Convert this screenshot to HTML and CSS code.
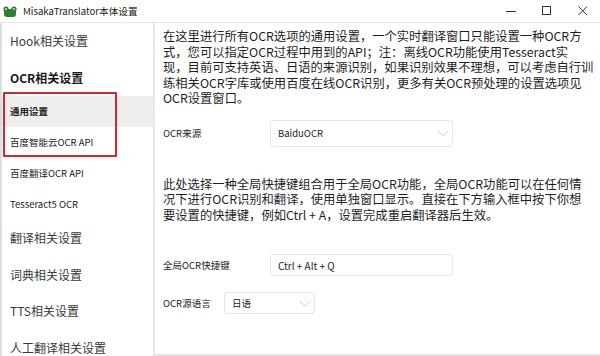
FILE: index.html
```
<!DOCTYPE html>
<html lang="zh-CN">
<head>
  <meta charset="UTF-8" />
  <meta name="viewport" content="width=device-width, initial-scale=1.0"/>
  <title>MisakaTranslator本体设置</title>
  <link rel="stylesheet" href="styles.css">
</head>
<body>

  <div class="window">
    <div class="titlebar">
      <svg class="app-icon" width="14" height="11" viewBox="0 0 14 11">
        <circle cx="3" cy="3" r="2.6" fill="#2f7d32"/>
        <circle cx="11" cy="3" r="2.6" fill="#2f7d32"/>
        <rect x="1" y="3" width="12" height="8" rx="3" fill="#2f7d32"/>
        <circle cx="3" cy="3" r="1" fill="#cfe8c8"/>
        <circle cx="11" cy="3" r="1" fill="#cfe8c8"/>
      </svg>
      <span class="title">MisakaTranslator本体设置</span>
      <div class="win-btns">
        <svg width="10" height="10" viewBox="0 0 10 10"><line x1="0" y1="5.5" x2="10" y2="5.5" stroke="#333" stroke-width="1"/></svg>
        <svg width="10" height="10" viewBox="0 0 10 10"><rect x="0.5" y="0.5" width="8" height="8" fill="none" stroke="#333" stroke-width="1"/></svg>
        <svg width="10" height="10" viewBox="0 0 10 10"><path d="M0.5 0.5 L9 9 M9 0.5 L0.5 9" stroke="#333" stroke-width="1"/></svg>
      </div>
    </div>

    <div class="main">
      <div class="sidebar">
        <div class="nav-item">Hook相关设置</div>
        <div class="nav-item bold">OCR相关设置</div>
        <div class="sub-item active">通用设置</div>
        <div class="sub-item">百度智能云OCR API</div>
        <div class="sub-item">百度翻译OCR API</div>
        <div class="sub-item">Tesseract5 OCR</div>
        <div class="nav-item">翻译相关设置</div>
        <div class="nav-item">词典相关设置</div>
        <div class="nav-item">TTS相关设置</div>
        <div class="nav-item">人工翻译相关设置</div>
        <div class="highlight"></div>
      </div>

      <div class="content">
        <p class="desc">在这里进行所有OCR选项的通用设置，一个实时翻译窗口只能设置一种OCR方<br>式，您可以指定OCR过程中用到的API；注：离线OCR功能使用Tesseract实<br>现，目前可支持英语、日语的来源识别，如果识别效果不理想，可以考虑自行训<br>练相关OCR字库或使用百度在线OCR识别，更多有关OCR预处理的设置选项见<br>OCR设置窗口。</p>

        <div class="row">
          <span class="label">OCR来源</span>
          <div class="select wide">
            <span>BaiduOCR</span>
            <svg class="chevron" width="12" height="7" viewBox="0 0 12 7"><path d="M0.5 0.5 L6 6 L11.5 0.5" fill="none" stroke="#cfcfcf" stroke-width="1"/></svg>
          </div>
        </div>

        <p class="desc second">此处选择一种全局快捷键组合用于全局OCR功能，全局OCR功能可以在任何情<br>况下进行OCR识别和翻译，使用单独窗口显示。直接在下方输入框中按下你想<br>要设置的快捷键，例如Ctrl + A，设置完成重启翻译器后生效。</p>

        <div class="row">
          <span class="label">全局OCR快捷键</span>
          <div class="input">Ctrl + Alt + Q</div>
        </div>

        <div class="row lang-row">
          <span class="label short">OCR源语言</span>
          <div class="select narrow">
            <span>日语</span>
            <svg class="chevron" width="12" height="7" viewBox="0 0 12 7"><path d="M0.5 0.5 L6 6 L11.5 0.5" fill="none" stroke="#cfcfcf" stroke-width="1"/></svg>
          </div>
        </div>
      </div>
    </div>
  </div>

</body>
</html>
```

FILE: styles.css
```
body {
  margin: 0;
  background: #fff;
  font-family: "Noto Sans CJK SC", "Noto Sans", sans-serif;
  color: #222;
}

.window {
  width: 600px;
  height: 356px;
  display: flex;
  flex-direction: column;
  overflow: hidden;
}

.titlebar {
  height: 22px;
  flex: none;
  display: flex;
  align-items: center;
  border-bottom: 1px solid #e6e6e6;
  padding-left: 3px;
}

.app-icon {
  margin-right: 6px;
}

.title {
  font-size: 9.6px;
  color: #222;
}

.win-btns {
  margin-left: auto;
  display: flex;
  gap: 26px;
  padding-right: 12px;
}

.main {
  flex: 1;
  display: flex;
  min-height: 0;
}

.sidebar {
  position: relative;
  width: 151px;
  flex: none;
  border-left: 2px solid #dedede;
  border-right: 2px solid #e8e8e8;
  overflow: hidden;
}

.nav-item {
  height: 36.5px;
  line-height: 36.5px;
  padding-left: 8px;
  font-size: 12px;
  color: #3a3a3a;
  white-space: nowrap;
}

.nav-item.bold {
  font-weight: bold;
  color: #1a1a1a;
}

.sub-item {
  height: 31px;
  line-height: 31px;
  padding-left: 8px;
  font-size: 9.5px;
  color: #222;
}

.sub-item.active {
  background: #efefef;
  font-weight: bold;
}

.highlight {
  position: absolute;
  left: 1px;
  top: 69px;
  width: 110px;
  height: 61px;
  border: 2px solid #d6262d;
  border-radius: 1px;
}

.content {
  flex: 1;
  padding: 6px 0 0 8px;
  border-bottom: 2px solid #e4e4e4;
}

.desc {
  margin: 0;
  font-size: 12.3px;
  line-height: 15.5px;
  white-space: nowrap;
  color: #1e1e1e;
}

.desc.second {
  margin-top: 30px;
}

.row {
  display: flex;
  align-items: center;
  margin-top: 13px;
}

.desc.second + .row {
  margin-top: 31px;
}

.lang-row {
  margin-top: 16px !important;
}

.label {
  width: 107px;
  flex: none;
  font-size: 9.5px;
  color: #222;
}

.label.short {
  width: 61px;
}

.select,
.input {
  box-sizing: border-box;
  display: flex;
  align-items: center;
  justify-content: space-between;
  border: 1px solid #e6e6e6;
  border-radius: 3px;
  padding: 0 3px 0 7px;
  font-size: 9.5px;
  color: #222;
}

.select.wide {
  width: 183px;
  height: 27px;
}

.select.narrow {
  width: 91px;
  height: 22px;
}

.input {
  width: 183px;
  height: 22px;
  font-size: 10px;
}
```
